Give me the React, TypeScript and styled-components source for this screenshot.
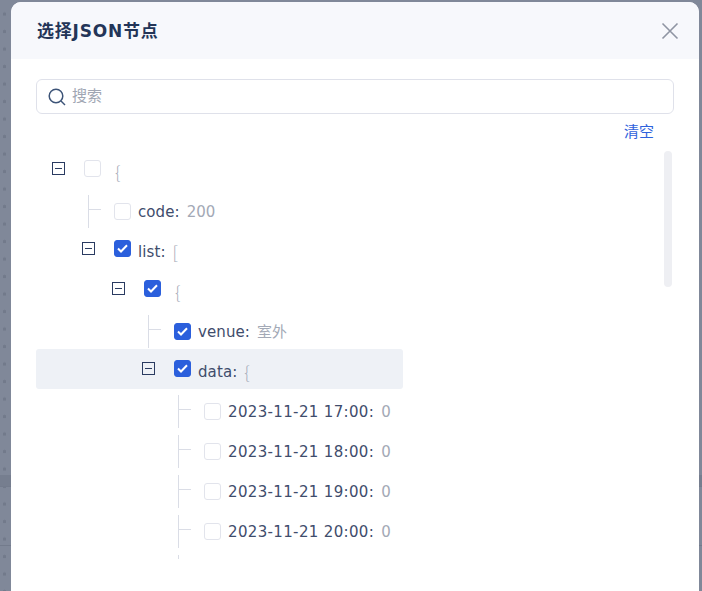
import { createGlobalStyle, styled } from "styled-components";

const GlobalStyle = createGlobalStyle`
  html, body {
    margin: 0;
    height: 100%;
    overflow: hidden;
  }
  #root {
    height: 100%;
  }
`;

const Page = styled.div`
  box-sizing: border-box;
  height: 591px;
  padding: 2px 3px 0 11px;
  overflow: hidden;
  background-color: #808899;
  background-image:
    linear-gradient(#767e8f, #767e8f),
    linear-gradient(#737b8c, #737b8c),
    linear-gradient(#737b8c, #737b8c),
    radial-gradient(circle at 4.5px 14px, #727a8b 1.5px, transparent 2px);
  background-size: 100% 11px, 100% 1px, 100% 1px, 11px 17.5px;
  background-position: 0 475px, 0 486px, 0 545px, 0 0;
  background-repeat: no-repeat, no-repeat, no-repeat, repeat-y;
`;

const Modal = styled.div`
  height: 100%;
  background: #fff;
  border-radius: 10px 10px 0 0;
  overflow: hidden;
  font-family: "DejaVu Sans", "Noto Sans CJK SC", sans-serif;
`;

const Header = styled.header`
  height: 57px;
  padding: 0 20px 0 26px;
  display: flex;
  align-items: center;
  justify-content: space-between;
  background: #f7f8fc;
`;

const Title = styled.h2`
  margin: 0 0 2px;
  font-size: 17px;
  letter-spacing: 0.8px;
  font-weight: 700;
  color: #233558;
`;

const Body = styled.div`
  padding: 20px 25px 0;
`;

const SearchBox = styled.div`
  box-sizing: border-box;
  height: 35px;
  padding: 0 11px;
  display: flex;
  align-items: center;
  gap: 6px;
  border: 1px solid #dfe1ea;
  border-radius: 6px;
`;

const Placeholder = styled.span`
  font-size: 15px;
  line-height: 20px;
  margin-bottom: 2px;
  color: #a0a6b3;
`;

const ClearRow = styled.div`
  height: 35px;
  padding: 8px 20px 0 0;
  box-sizing: border-box;
  display: flex;
  justify-content: flex-end;
`;

const ClearLink = styled.a`
  font-size: 15px;
  line-height: 20px;
  color: #2f62dc;
`;

const TreeArea = styled.div`
  position: relative;
  height: 410px;
  overflow: hidden;
`;

const Scrollbar = styled.div`
  position: absolute;
  top: 2px;
  right: 2px;
  width: 8px;
  height: 136px;
  border-radius: 4px;
  background: #eeeff3;
`;

const Row = styled.div<{ $level: number; $active?: boolean }>`
  position: relative;
  box-sizing: border-box;
  width: 367px;
  height: 40px;
  padding-left: ${p => p.$level * 30}px;
  display: flex;
  border-radius: 3px;
  background: ${p => (p.$active ? "#eef1f6" : "transparent")};
`;

const SwitcherSlot = styled.div`
  flex: none;
  width: 48px;
  padding: 13px 0 0 16px;
  box-sizing: border-box;
`;

const Switcher = styled.span`
  display: block;
  box-sizing: border-box;
  position: relative;
  width: 13px;
  height: 13px;
  border: 1px solid #2a3b61;
  &::after {
    content: "";
    position: absolute;
    left: 2px;
    right: 2px;
    top: 5px;
    height: 1px;
    background: #2a3b61;
  }
`;

const Guide = styled.div`
  flex: none;
  position: relative;
  width: 48px;
  &::before {
    content: "";
    position: absolute;
    left: 22px;
    top: 6px;
    width: 1px;
    height: 33px;
    background: #dadde6;
  }
  &::after {
    content: "";
    position: absolute;
    left: 22px;
    top: 20px;
    width: 13px;
    height: 1px;
    background: #dadde6;
  }
`;

const Check = styled.span<{ $checked?: boolean; $leaf?: boolean }>`
  flex: none;
  box-sizing: border-box;
  width: 17px;
  height: 17px;
  margin-top: ${p => (p.$leaf ? 14 : 11)}px;
  display: flex;
  align-items: center;
  justify-content: center;
  border-radius: 3px;
  border: 1px solid ${p => (p.$checked ? "#2b5fdc" : "#e2e4ec")};
  background: ${p => (p.$checked ? "#2b5fdc" : "#fff")};
`;

const Label = styled.div<{ $bare?: boolean }>`
  margin-left: ${p => (p.$bare ? 14 : 7)}px;
  display: flex;
  gap: 7px;
  font-size: 15px;
  line-height: 47px;
  white-space: nowrap;
`;

const Key = styled.span<{ $date?: boolean }>`
  color: #3f4d6c;
  letter-spacing: ${p => (p.$date ? 0.35 : 0.1)}px;
`;

const Value = styled.span`
  color: #a3a9b6;
`;

const Bracket = styled.span`
  margin-top: -1px;
  color: #a3a9b6;
  font-family: "Noto Sans CJK SC", sans-serif;
  font-weight: 300;
  font-size: 17px;
`;

type TreeNode = {
  level: number;
  leaf?: boolean;
  checked?: boolean;
  active?: boolean;
  name?: string;
  value: string;
};

const nodes: TreeNode[] = [
  { level: 0, value: "{" },
  { level: 1, leaf: true, name: "code:", value: "200" },
  { level: 1, checked: true, name: "list:", value: "[" },
  { level: 2, checked: true, value: "{" },
  { level: 3, leaf: true, checked: true, name: "venue:", value: "室外" },
  { level: 3, checked: true, active: true, name: "data:", value: "{" },
  { level: 4, leaf: true, name: "2023-11-21 17:00:", value: "0" },
  { level: 4, leaf: true, name: "2023-11-21 18:00:", value: "0" },
  { level: 4, leaf: true, name: "2023-11-21 19:00:", value: "0" },
  { level: 4, leaf: true, name: "2023-11-21 20:00:", value: "0" },
];

const App = () => (
  <Page>
    <GlobalStyle />
    <Modal>
      <Header>
        <Title>选择JSON节点</Title>
        <svg width="18" height="18" viewBox="0 0 18 18" fill="none" stroke="#8f95a3" strokeWidth="1.6">
          <path d="M1.5 1.5 16.5 16.5M16.5 1.5 1.5 16.5" />
        </svg>
      </Header>
      <Body>
        <SearchBox>
          <svg width="18" height="18" viewBox="0 0 18 18" fill="none" stroke="#3d5478" strokeWidth="1.5">
            <circle cx="8" cy="8" r="6.8" />
            <path d="M13 13 17 17" />
          </svg>
          <Placeholder>搜索</Placeholder>
        </SearchBox>
        <ClearRow>
          <ClearLink>清空</ClearLink>
        </ClearRow>
        <TreeArea>
          <Scrollbar />
          {nodes.map((node, i) => (
            <Row key={i} $level={node.level} $active={node.active}>
              {node.leaf ? (
                <Guide />
              ) : (
                <SwitcherSlot>
                  <Switcher />
                </SwitcherSlot>
              )}
              <Check $checked={node.checked} $leaf={node.leaf}>
                {node.checked && (
                  <svg width="11" height="9" viewBox="0 0 11 9" fill="none" stroke="#fff" strokeWidth="2">
                    <path d="M1 4.5 4 7.5 10 1.2" />
                  </svg>
                )}
              </Check>
              <Label $bare={!node.name}>
                {node.name && <Key $date={node.name.length > 10}>{node.name}</Key>}
                {node.leaf ? <Value>{node.value}</Value> : <Bracket>{node.value}</Bracket>}
              </Label>
            </Row>
          ))}
          <Row $level={4}>
            <Guide />
          </Row>
        </TreeArea>
      </Body>
    </Modal>
  </Page>
);

export default App;
